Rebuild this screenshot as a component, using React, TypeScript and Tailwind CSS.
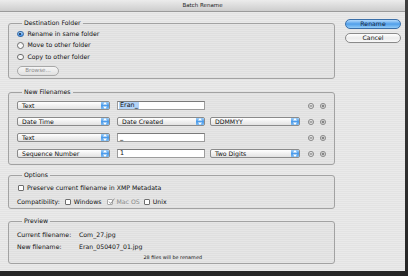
import React from "react";

const font = "font-['DejaVu_Sans',sans-serif]";

function Arrows() {
  return (
    <div className="flex w-[8px] self-stretch items-center justify-center rounded-r-[1px] bg-linear-to-b from-[#9fd0fa] via-[#4b9bea] to-[#7fbdf4]">
      <svg width="4" height="7" viewBox="0 0 4 7">
        <path d="M2 0 L4 2.6 L0 2.6 Z" fill="#fff" />
        <path d="M0 4.4 L4 4.4 L2 7 Z" fill="#fff" />
      </svg>
    </div>
  );
}

function Pop({ label, className }: { label: string; className: string }) {
  return (
    <div className={`flex h-[9px] items-stretch rounded-[2px] border border-[#8a8a8a] bg-linear-to-b from-white to-[#e2e2e2] ${className}`}>
      <span className="flex-1 pl-[4px] leading-[7px] text-[6.2px] text-[#111]">{label}</span>
      <Arrows />
    </div>
  );
}

// underscores are thin at this size, so they get a heavier weight
function Field({ value, selected }: { value: string; selected?: boolean }) {
  const parts = value.split(/(_)/);
  return (
    <div className="flex h-[9px] w-[88px] items-center border border-[#9c9c9c] border-t-[#7a7a7a] bg-white pl-[1px]">
      <span className={`h-[7px] px-[1px] text-[6.4px] leading-[7px] text-[#111] ${selected ? "bg-[#b3d3f7]" : ""}`}>
        {parts.map((p, i) => (p === "_" ? <span key={i} className="font-bold">_</span> : p))}
      </span>
    </div>
  );
}

function PlusMinus() {
  return (
    <div className="ml-[8px] flex gap-[6px]">
      <svg width="6" height="6" viewBox="0 0 6 6">
        <circle cx="3" cy="3" r="2.6" fill="none" stroke="#6a6a6a" strokeWidth="0.7" />
        <path d="M1.6 3 H4.4" stroke="#444" strokeWidth="0.7" />
      </svg>
      <svg width="6" height="6" viewBox="0 0 6 6">
        <circle cx="3" cy="3" r="2.6" fill="none" stroke="#6a6a6a" strokeWidth="0.7" />
        <path d="M1.6 3 H4.4 M3 1.6 V4.4" stroke="#444" strokeWidth="0.7" />
      </svg>
    </div>
  );
}

function Radio({ label, on }: { label: string; on?: boolean }) {
  return (
    <div className="flex h-[11.5px] items-center gap-[4px]">
      {on ? (
        <span className="flex h-[6.5px] w-[6.5px] items-center justify-center rounded-full border border-[#3a6ea8] bg-linear-to-b from-[#a9d4fa] to-[#3d8ee6]">
          <span className="h-[2px] w-[2px] rounded-full bg-[#1c2a40]" />
        </span>
      ) : (
        <span className="h-[6.5px] w-[6.5px] rounded-full border border-[#6e6e6e] bg-linear-to-b from-[#f2f2f2] to-white" />
      )}
      <span className="text-[6.2px] leading-none text-[#111]">{label}</span>
    </div>
  );
}

function Check({ label, on, dim }: { label: string; on?: boolean; dim?: boolean }) {
  return (
    <div className="flex items-center gap-[3px]">
      <span className={`relative h-[6px] w-[6px] rounded-[1px] border bg-white ${dim ? "border-[#a8a8a8]" : "border-[#6e6e6e]"}`}>
        {on && (
          <svg width="7" height="7" viewBox="0 0 7 7" className="absolute -top-[2px] left-0">
            <path d="M1 3.6 L2.8 5.6 L6.4 0.6" fill="none" stroke="#8a8a8a" strokeWidth="0.9" />
          </svg>
        )}
      </span>
      <span className={`text-[6.2px] leading-none ${dim ? "text-[#8c8c8c]" : "text-[#111]"}`}>{label}</span>
    </div>
  );
}

function Group({ title, className, children }: { title: string; className: string; children: React.ReactNode }) {
  return (
    <fieldset className={`rounded-[3px] border border-[#a2a2a2] bg-black/[0.015] px-[8px] ${className}`}>
      <legend className="ml-[5px] px-[2px] text-[6.2px] leading-[8px] text-[#111]">{title}</legend>
      {children}
    </fieldset>
  );
}

export default function App() {
  return (
    <div className={`h-[276px] w-[408px] overflow-hidden bg-linear-to-b from-[#3e3e3e] to-[#262626] ${font}`}>
      <div className="flex h-[271px] w-[405px] flex-col bg-[repeating-linear-gradient(to_bottom,#eaeaea_0px,#eaeaea_1px,#e3e3e3_1px,#e3e3e3_2px)]">
        <div className="flex h-[12px] items-center justify-center border-b border-[#9a9a9a] bg-linear-to-b from-[#ececec] to-[#cdcdcd]">
          <span className="text-[5.5px] leading-none text-[#222]">Batch Rename</span>
        </div>

        <div className="flex flex-1">
          <div className="ml-[8px] flex w-[327px] flex-col pt-[7px]">
            <Group title="Destination Folder" className="pb-[2px]">
              <div className="pt-[1px]">
                <Radio label="Rename in same folder" on />
                <Radio label="Move to other folder" />
                <Radio label="Copy to other folder" />
              </div>
              <div className="mt-[3.5px] flex h-[10px] w-[42px] items-center justify-center rounded-full border border-[#a8a8a8] bg-linear-to-b from-[#f6f6f6] to-[#e0e0e0]">
                <span className="text-[5.6px] leading-none text-[#8a8a8a]">Browse...</span>
              </div>
            </Group>

            <Group title="New Filenames" className="mt-[9px] pb-[6px]">
              <div className="flex flex-col gap-[7px] pt-[5px]">
                <div className="flex items-center">
                  <Pop label="Text" className="w-[93px]" />
                  <div className="ml-[7px]"><Field value="Eran_" selected /></div>
                  <div className="ml-[5px] w-[90px]" />
                  <PlusMinus />
                </div>
                <div className="flex items-center">
                  <Pop label="Date Time" className="w-[93px]" />
                  <Pop label="Date Created" className="ml-[7px] w-[88px]" />
                  <Pop label="DDMMYY" className="ml-[5px] w-[90px]" />
                  <PlusMinus />
                </div>
                <div className="flex items-center">
                  <Pop label="Text" className="w-[93px]" />
                  <div className="ml-[7px]"><Field value="_" /></div>
                  <div className="ml-[5px] w-[90px]" />
                  <PlusMinus />
                </div>
                <div className="flex items-center">
                  <Pop label="Sequence Number" className="w-[93px]" />
                  <div className="ml-[7px]"><Field value="1" /></div>
                  <Pop label="Two Digits" className="ml-[5px] w-[90px]" />
                  <PlusMinus />
                </div>
              </div>
            </Group>

            <Group title="Options" className="mt-[6px] pb-[1px]">
              <div className="flex flex-col gap-[4px] pt-[4px]">
                <div className="flex h-[10px] items-center pl-[1px]">
                  <Check label="Preserve current filename in XMP Metadata" />
                </div>
                <div className="flex h-[10px] items-center">
                  <span className="text-[6.2px] leading-none text-[#111]">Compatibility:</span>
                  <div className="ml-[5px]"><Check label="Windows" /></div>
                  <div className="ml-[6px]"><Check label="Mac OS" on dim /></div>
                  <div className="ml-[4px]"><Check label="Unix" /></div>
                </div>
              </div>
            </Group>

            <Group title="Preview" className="mt-[8px] pb-[3px]">
              <div className="flex flex-col pt-[5px] text-[6.2px] leading-none text-[#111]">
                <div className="flex h-[10px] items-center">
                  <span className="w-[62px]">Current filename:</span>
                  <span>Com_27.jpg</span>
                </div>
                <div className="mt-[2px] flex h-[10px] items-center">
                  <span className="w-[62px]">New filename:</span>
                  <span>Eran_050407_01.jpg</span>
                </div>
                <div className="mt-[2px] flex h-[6px] w-[185px] items-center justify-end">
                  <span className="text-[4.9px]">28 files will be renamed</span>
                </div>
              </div>
            </Group>
          </div>

          <div className="ml-[10px] flex w-[56px] flex-col gap-[4px] pt-[7px]">
            <div className="flex h-[10px] items-center justify-center rounded-full border border-[#3b6fa8] bg-linear-to-b from-[#b4dafb] via-[#4f9fea] to-[#93ccf8]">
              <span className="text-[6.2px] leading-none text-[#16243c]">Rename</span>
            </div>
            <div className="flex h-[10px] items-center justify-center rounded-full border border-[#8a8a8a] bg-linear-to-b from-white via-[#ececec] to-[#f8f8f8]">
              <span className="text-[6.2px] leading-none text-[#111]">Cancel</span>
            </div>
          </div>
        </div>
      </div>
    </div>
  );
}
